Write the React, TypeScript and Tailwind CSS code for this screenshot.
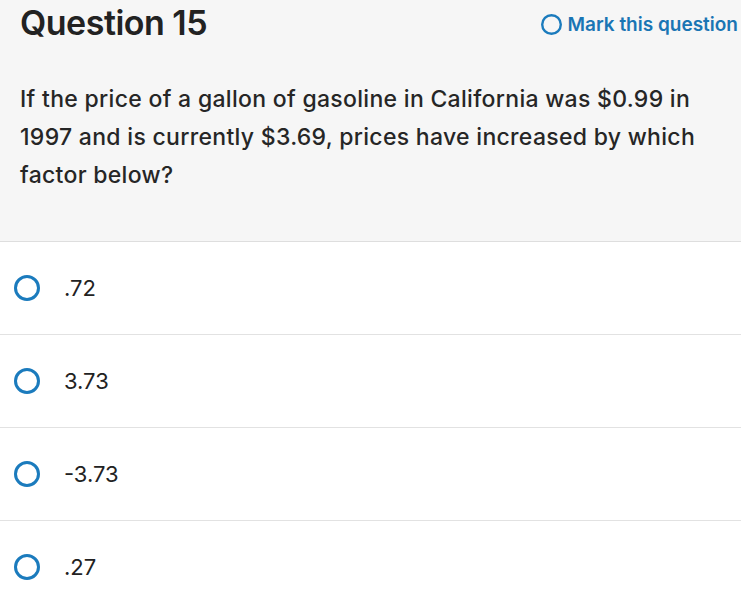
const options = ['.72', '3.73', '-3.73', '.27'];

const Circle = ({ size, stroke }: { size: number; stroke: number }) => (
  <svg width={size} height={size} viewBox={`0 0 ${size} ${size}`} className="shrink-0">
    <circle cx={size / 2} cy={size / 2} r={size / 2 - stroke / 2} fill="none" stroke="#1b7bbd" strokeWidth={stroke} />
  </svg>
);

const App = () => {
  return (
    <div className="w-[741px] h-[603px] overflow-hidden bg-white font-['Inter',sans-serif] text-[#262626]">
      <div className="h-[242px] bg-[#f6f6f6] border-b border-[#dedede]">
        <div className="flex items-start justify-between h-[48px]">
          <h1 className="pl-5 pt-[1px] text-[34px] leading-[44px] font-semibold tracking-[-0.5px] text-[#222]">Question 15</h1>
          <button className="flex items-center gap-[6px] pt-[14px] pr-[3px] text-[19px] leading-5 font-semibold text-[#1a75b4]">
            <Circle size={21} stroke={2.4} />
            Mark this question
          </button>
        </div>
        <p className="px-5 pt-[32px] text-[23px] leading-[38px] font-medium tracking-[0.3px] text-[#262626]">
          If the price of a gallon of gasoline in California was $0.99 in 1997 and is currently $3.69, prices have increased by which factor below?
        </p>
      </div>
      {options.map(o => (
        <div key={o} className="flex items-center h-[93px] border-b border-[#e2e2e2] pl-[14px]">
          <Circle size={26} stroke={3} />
          <span className="ml-[24px] text-[22px] text-[#222]">{o}</span>
        </div>
      ))}
    </div>
  );
};

export default App;
